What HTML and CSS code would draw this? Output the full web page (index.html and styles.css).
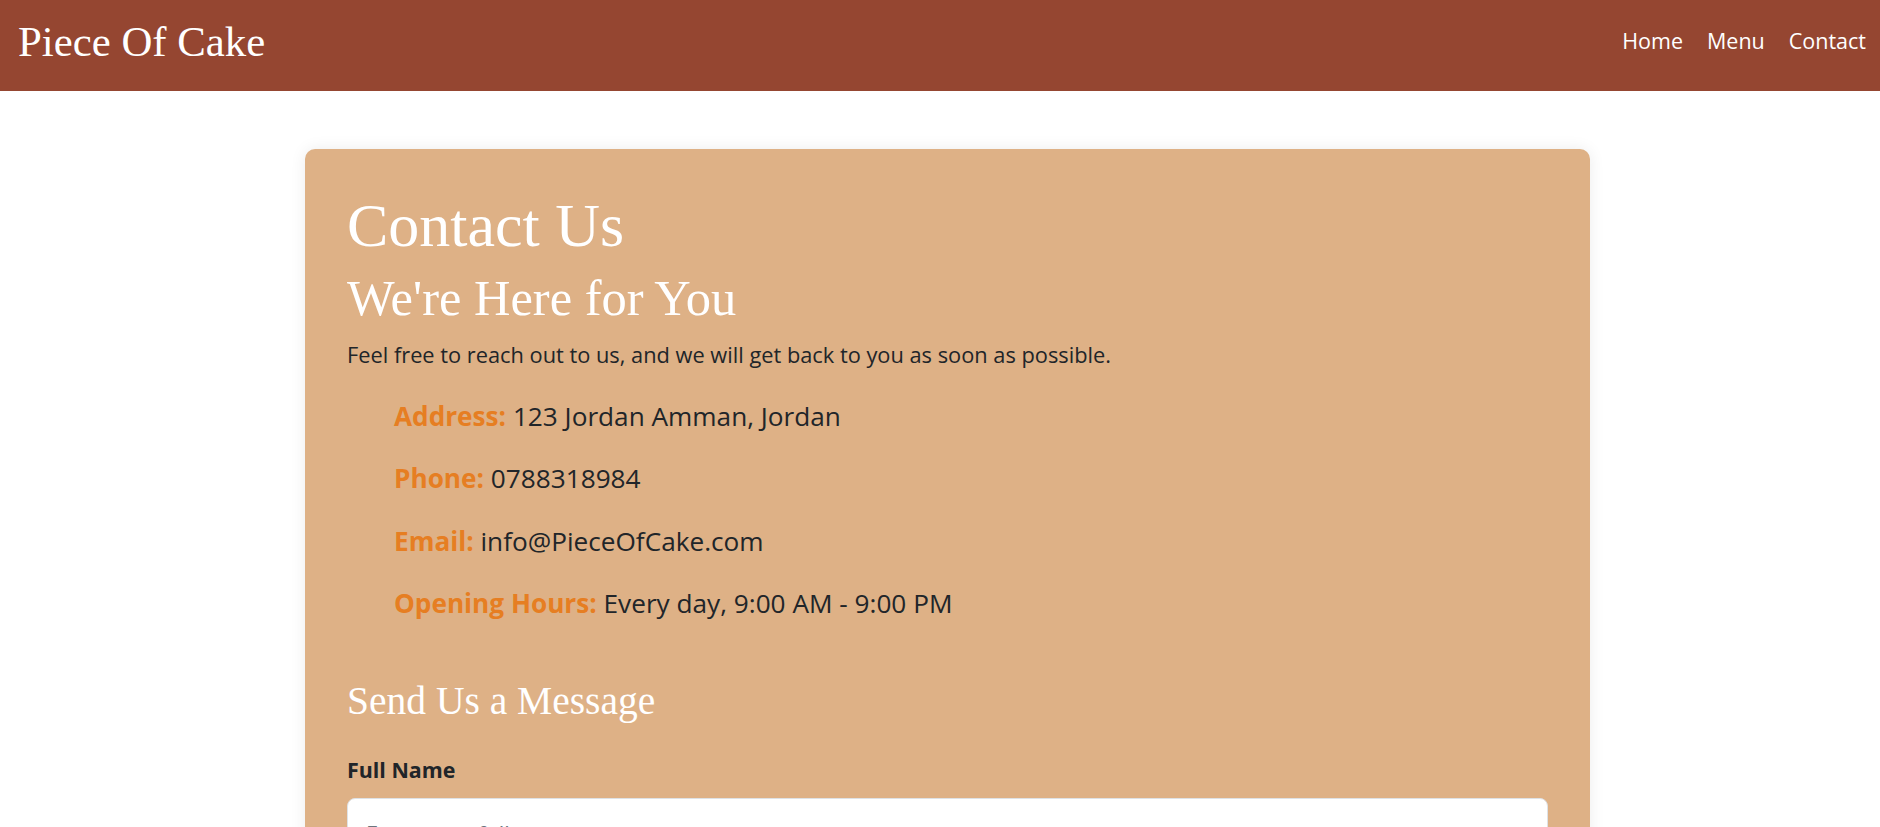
FILE: index.html
```html
<!DOCTYPE html>
<html lang="en">
<head>
<meta charset="utf-8">
<title>Contact Us - Piece Of Cake</title>
<link rel="stylesheet" href="styles.css">
</head>
<body>
<header class="site-header">
  <a class="brand" href="#">Piece Of Cake</a>
  <nav class="nav">
    <a class="nav-link" href="#">Home</a>
    <a class="nav-link" href="#">Menu</a>
    <a class="nav-link" href="#">Contact</a>
  </nav>
</header>
<main class="page">
  <section class="card">
    <h1 class="title">Contact Us</h1>
    <h2 class="subtitle">We're Here for You</h2>
    <p class="intro">Feel free to reach out to us, and we will get back to you as soon as possible.</p>
    <ul class="info">
      <li><span class="label">Address:</span> 123 Jordan Amman, Jordan</li>
      <li><span class="label">Phone:</span> 0788318984</li>
      <li><span class="label">Email:</span> info@PieceOfCake.com</li>
      <li><span class="label">Opening Hours:</span> Every day, 9:00 AM - 9:00 PM</li>
    </ul>
    <h3 class="form-title">Send Us a Message</h3>
    <form class="form">
      <label class="field-label" for="name">Full Name</label>
      <input class="field" id="name" type="text" placeholder="Enter your full name">
      <label class="field-label" for="email">Email</label>
      <input class="field" id="email" type="email" placeholder="Enter your email">
      <label class="field-label" for="msg">Message</label>
      <textarea class="field area" id="msg" placeholder="Write your message"></textarea>
      <button class="btn" type="button">Send</button>
    </form>
  </section>
</main>
</body>
</html>
```

FILE: styles.css
```css
* { box-sizing: border-box; }
html, body { margin: 0; padding: 0; }
body {
  background: #ffffff;
  color: #212529;
  font-family: "Open Sans", "Noto Sans", sans-serif;
  font-size: 21.8px;
  line-height: 1.5;
}
.site-header {
  height: 91px;
  background: #954631;
  display: flex;
  align-items: center;
  justify-content: space-between;
  padding: 0 14px 8px 18px;
}
.brand {
  font-family: "Liberation Serif", "Times New Roman", serif;
  font-size: 42.8px;
  line-height: 1.2;
  color: #ffffff;
  text-decoration: none;
}
.nav { display: flex; gap: 24px; }
.nav-link {
  color: #ffffff;
  text-decoration: none;
  font-size: 21.5px;
  line-height: 1.5;
}
.page { padding: 58px 0 40px 305px; }
.card {
  width: 1285px;
  background: #deb186;
  border-radius: 10px;
  box-shadow: 0 0 16px rgba(0, 0, 0, 0.08);
  padding: 40px 42px;
}
.title, .subtitle, .form-title {
  font-family: "Liberation Serif", "Times New Roman", serif;
  font-weight: 400;
  color: #ffffff;
  margin: 0;
}
.title { font-size: 62px; line-height: 72px; margin-bottom: 8px; }
.subtitle { font-size: 50.5px; line-height: 58px; margin-bottom: 11.5px; }
.intro { margin: 0 0 26.3px; font-size: 21.8px; line-height: 32px; }
.info { list-style: none; margin: 0; padding: 0 0 0 47px; }
.info li { font-size: 26.2px; line-height: 38px; margin-bottom: 24.5px; }
.info li:last-child { margin-bottom: 0; }
.label { color: #e67e22; font-weight: 700; }
.form-title { font-size: 39.5px; line-height: 46px; margin: 55.4px 0 30px; }
.form { display: flex; flex-direction: column; }
.field-label { font-weight: 700; font-size: 21.4px; line-height: 32px; margin-bottom: 12.3px; }
.field {
  width: 100%;
  background: #ffffff;
  border: 1px solid #dee2e6;
  border-radius: 8px;
  font-family: inherit;
  font-size: 21.8px;
  line-height: 32px;
  padding: 19px 18px 17px;
  margin-bottom: 24px;
  color: #212529;
}
.field::placeholder { color: #6c757d; }
.area { height: 160px; resize: none; }
.btn {
  align-self: flex-start;
  background: #954631;
  color: #ffffff;
  border: 0;
  border-radius: 8px;
  font-family: inherit;
  font-size: 21.8px;
  padding: 10px 28px;
}
```
